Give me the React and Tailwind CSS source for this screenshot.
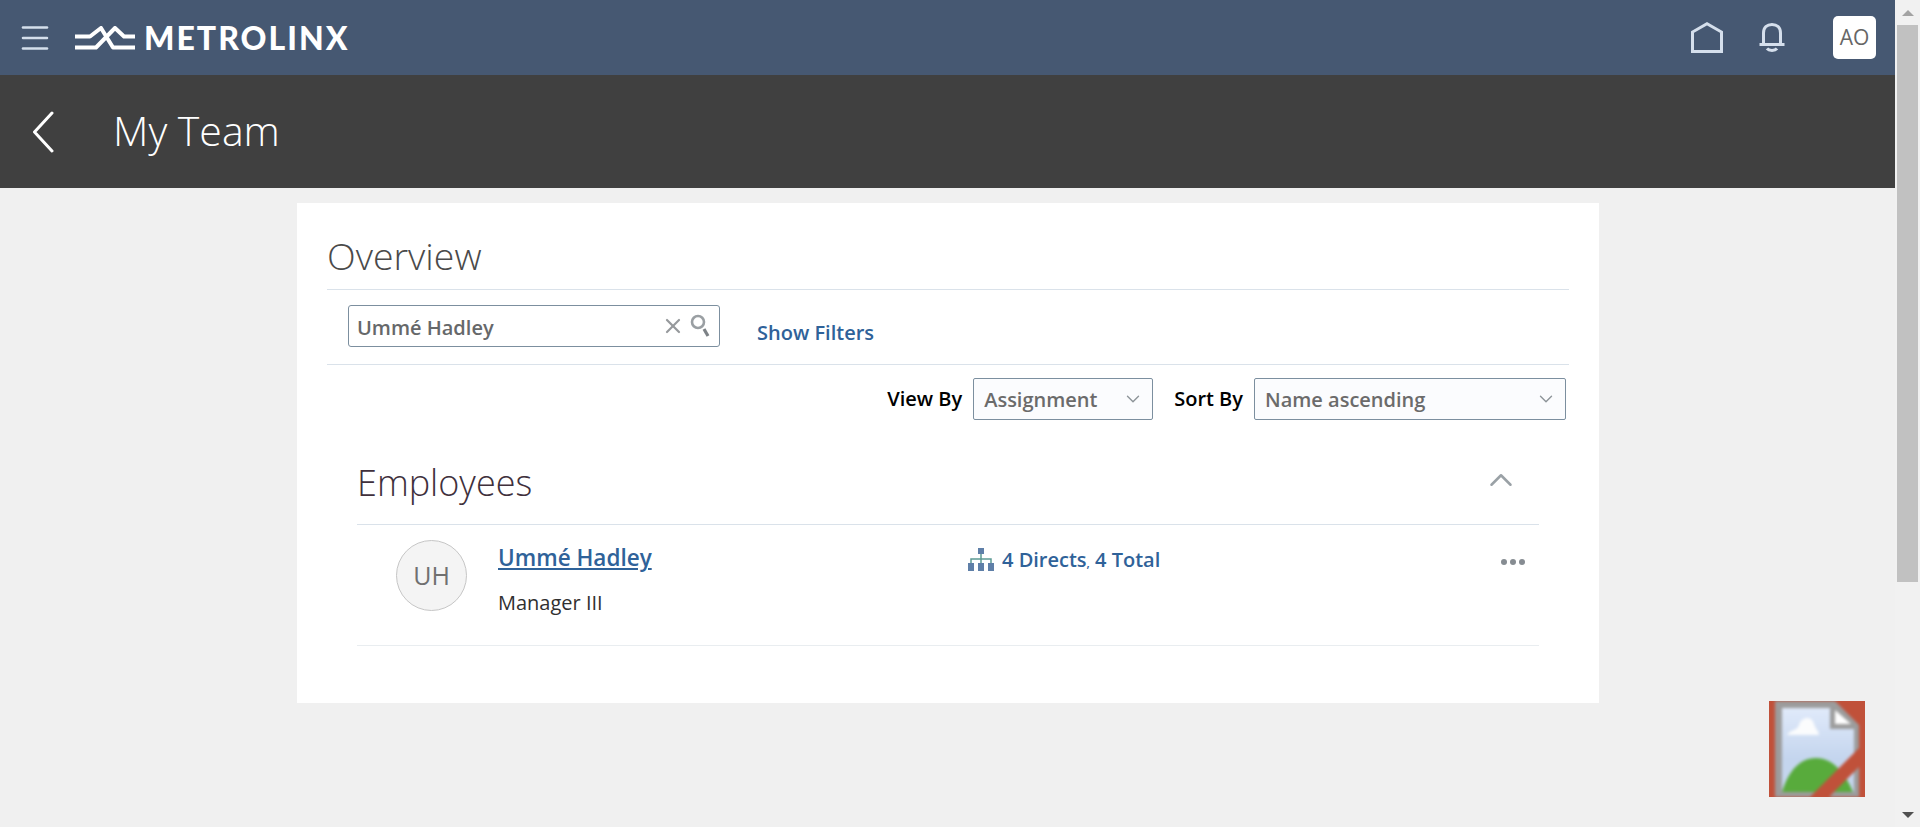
import { Menu, X, ChevronDown, ChevronUp } from "lucide-react";

const font = "font-['Open_Sans','Noto_Sans',sans-serif]";

function Logo() {
    return (
        <div className="flex items-center ml-[22px]">
            <svg width="60" height="24" viewBox="0 0 60 24" fill="none" stroke="white" strokeWidth="4" strokeLinejoin="round">
                <path d="M0 10.5H15L26 2L38 21.5H60" />
                <path d="M0 21.5H21L40 2L49 10.5H60" />
            </svg>
            <span className="ml-[9px] font-['Lato',sans-serif] font-black text-[32px] leading-none tracking-[2px] text-white">METROLINX</span>
        </div>
    );
}

function HomeIcon() {
    return (
        <svg width="32" height="31" viewBox="0 0 32 31" fill="none" stroke="#d5dfec" strokeWidth="3">
            <path d="M1.5 29.5V10L16 1.8L30.5 10V29.5Z" />
        </svg>
    );
}

function BellIcon() {
    return (
        <svg width="26" height="29" viewBox="0 0 26 29" fill="none" stroke="#d5dfec" strokeWidth="3">
            <path d="M4.5 20V10C4.5 4.5 8 1.5 13 1.5C18 1.5 21.5 4.5 21.5 10V20" />
            <path d="M0.5 21.5H25.5" />
            <path d="M8 25.5C10 28 16 28 18 25.5" />
        </svg>
    );
}

function BackIcon() {
    return (
        <svg width="22" height="42" viewBox="0 0 22 42" fill="none" stroke="white" strokeWidth="3" strokeLinecap="round" strokeLinejoin="round">
            <path d="M20 2L2.5 21L20 40" />
        </svg>
    );
}

function OrgIcon() {
    return (
        <svg width="26" height="23" viewBox="0 0 26 23">
            <rect x="10" y="0" width="6" height="6" fill="#5f7fa8" />
            <path d="M13 6V15M3 15V11H23V15" stroke="#5c9a94" strokeWidth="1.5" fill="none" />
            <rect x="0" y="15" width="6" height="8" fill="#5f7fa8" />
            <rect x="10" y="15" width="6" height="8" fill="#5f7fa8" />
            <rect x="20" y="15" width="6" height="8" fill="#5f7fa8" />
        </svg>
    );
}

function SearchIcon() {
    return (
        <svg width="20" height="24" viewBox="0 0 20 24" fill="none">
            <circle cx="8" cy="8" r="6" stroke="#9a9fa3" strokeWidth="2.6" />
            <path d="M14 15L18 22" stroke="#7d8286" strokeWidth="3.2" />
        </svg>
    );
}

function BrokenImage() {
    return (
        <div className="absolute left-[1769px] top-[701px] w-[96px] h-[96px] overflow-hidden bg-[#c0513a]">
            <svg width="96" height="96" viewBox="0 0 96 96" className="blur-[1.5px]">
                <defs>
                    <linearGradient id="sky" x1="0" y1="0" x2="0" y2="1">
                        <stop offset="0" stopColor="#e0eafa" />
                        <stop offset="0.6" stopColor="#c4d5ee" />
                    </linearGradient>
                </defs>
                <rect x="-10" y="-10" width="116" height="116" fill="#c0513a" />
                <rect x="6" y="-10" width="84" height="116" fill="#9c9c9c" />
                <rect x="13" y="7" width="72" height="84" fill="url(#sky)" />
                <path d="M18 34C22 28 28 30 30 24C33 15 43 15 45 23C47 29 50 30 50 34Z" fill="#fbfcfd" />
                <path d="M13 91C20 68 32 57 47 57C64 57 76 72 84 91Z" fill="#58ab3c" />
                <path d="M61 0H90V28H61Z" fill="#9c9c9c" />
                <path d="M66 9L82 23H66Z" fill="#ffffff" />
                <path d="M64 -10H106V40L64 -2Z" fill="#c0513a" />
                <path d="M31 106L106 31V50L50 106Z" fill="#c0513a" />
            </svg>
        </div>
    );
}

function SelectBox({ value, width }) {
    return (
        <div className={`${width} relative h-[42px] flex items-center justify-between pl-[10px] pr-[8px] border border-[#7c8f9f] rounded-[2px] bg-[#fbfcfe]`}>
            <span className="text-[20px] font-semibold text-[#6b6b6b] leading-none pt-[2px]">{value}</span>
            <ChevronDown size={22} strokeWidth={1.5} className="text-[#8d9499]" />
        </div>
    );
}

export default function App() {
    return (
        <div className={`relative flex h-[827px] overflow-hidden bg-[#f0f0f0] ${font}`}>
            <div className="flex-1 min-w-0">
                <header className="h-[75px] bg-[#465872] flex items-center pl-[17px] pr-[19px]">
                    <Menu size={36} strokeWidth={1.7} className="text-[#d5dfec]" />
                    <Logo />
                    <div className="ml-auto flex items-center">
                        <HomeIcon />
                        <div className="ml-[36px]"><BellIcon /></div>
                        <div className="ml-[48px] w-[43px] h-[43px] rounded-[5px] bg-white flex items-center justify-center text-[21px] text-[#666666]">AO</div>
                    </div>
                </header>

                <div className="h-[113px] bg-[#404040] flex items-center pl-[32px]">
                    <BackIcon />
                    <h1 className="ml-[59px] text-[41px] font-light text-white leading-none -mt-[2px]">My Team</h1>
                </div>

                <main className="w-[1302px] h-[500px] ml-[297px] mt-[15px] bg-white px-[30px] pt-[35px]">
                    <h2 className="h-[51px] text-[37.5px] font-light text-[#4a4a4a] leading-[36px]">Overview</h2>

                    <div className="h-[76px] border-y border-[#dae2ea] flex items-start pl-[21px] pt-[15px]">
                        <div className="w-[372px] h-[42px] border border-[#7c8f9f] rounded-[3px] flex items-center pl-[8px] pr-[9px]">
                            <span className="text-[20px] font-semibold text-[#66686a] leading-none pt-[4px]">Ummé Hadley</span>
                            <X size={24} strokeWidth={2.2} className="ml-auto text-[#96999c]" />
                            <div className="ml-[5px]"><SearchIcon /></div>
                        </div>
                        <a className="ml-[37px] mt-[18px] text-[20px] font-semibold text-[#2f6299] leading-none">Show Filters</a>
                    </div>

                    <div className="flex items-center justify-end gap-[11px] pr-[3px] mt-[13px]">
                        <span className="text-[20px] font-semibold text-black leading-none">View By</span>
                        <SelectBox value="Assignment" width="w-[180px]" />
                        <span className="ml-[10px] text-[20px] font-semibold text-black leading-none">Sort By</span>
                        <SelectBox value="Name ascending" width="w-[312px]" />
                    </div>

                    <section className="mx-[30px] mt-[41px]">
                        <div className="h-[64px] border-b border-[#dae2ea] flex items-start justify-between">
                            <h3 className="text-[36px] font-light text-[#40303c] leading-[44px]">Employees</h3>
                            <ChevronUp size={38} strokeWidth={1.6} className="text-[#9aa1a6] mr-[19px]" />
                        </div>
                        <div className="h-[121px] border-b border-[#e9edf0] flex items-start pl-[39px] pt-[15px]">
                            <div className="w-[71px] h-[71px] shrink-0 rounded-full border border-[#c6c6c6] bg-[#f4f4f4] flex items-center justify-center text-[25px] text-[#707070]">UH</div>
                            <div className="w-[470px] ml-[31px]">
                                <a className="block text-[22.5px] font-semibold text-[#2f6299] underline leading-[30px] mt-[3px]">Ummé Hadley</a>
                                <p className="mt-[17px] text-[20px] text-[#303030] leading-[26px]">Manager III</p>
                            </div>
                            <div className="flex items-center gap-[8px] mt-[8px]">
                                <OrgIcon />
                                <span className="text-[20px] font-semibold text-[#2f6299] leading-none">4 Directs<span className="text-[12px]">,</span> 4 Total</span>
                            </div>
                            <div className="ml-auto mr-[14px] mt-[19px] flex gap-[3px]">
                                <span className="w-[6px] h-[6px] rounded-full bg-[#868c92]" />
                                <span className="w-[6px] h-[6px] rounded-full bg-[#868c92]" />
                                <span className="w-[6px] h-[6px] rounded-full bg-[#868c92]" />
                            </div>
                        </div>
                    </section>
                </main>
            </div>

            <aside className="w-[25px] h-full shrink-0 bg-[#f1f1f1] flex flex-col items-center">
                <div className="h-[25px] flex items-center justify-center">
                    <div className="w-0 h-0 border-x-[6px] border-x-transparent border-b-[6px] border-b-[#a3a3a3]" />
                </div>
                <div className="w-[21px] h-[557px] bg-[#c1c1c1]" />
                <div className="mt-auto h-[25px] flex items-center justify-center">
                    <div className="w-0 h-0 border-x-[6px] border-x-transparent border-t-[6px] border-t-[#505050]" />
                </div>
            </aside>

            <BrokenImage />
        </div>
    );
}
